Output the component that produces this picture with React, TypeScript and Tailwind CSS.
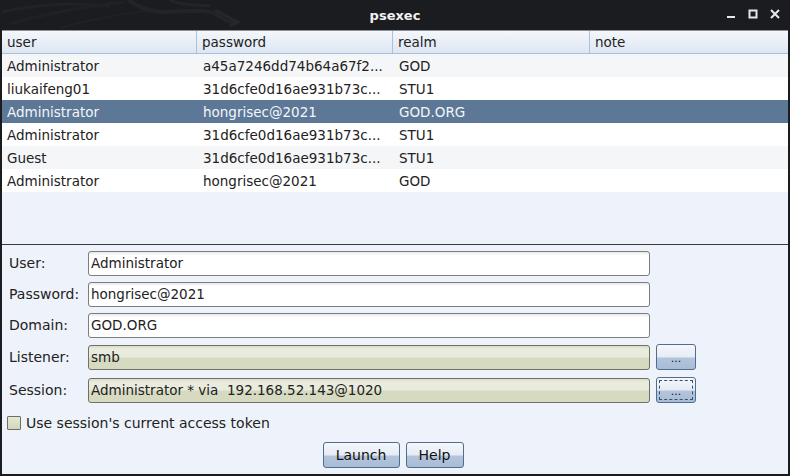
import { useState } from 'react';

const rows = [
  { user: 'Administrator', password: 'a45a7246dd74b64a67f2...', realm: 'GOD', note: '' },
  { user: 'liukaifeng01', password: '31d6cfe0d16ae931b73c...', realm: 'STU1', note: '' },
  { user: 'Administrator', password: 'hongrisec@2021', realm: 'GOD.ORG', note: '' },
  { user: 'Administrator', password: '31d6cfe0d16ae931b73c...', realm: 'STU1', note: '' },
  { user: 'Guest', password: '31d6cfe0d16ae931b73c...', realm: 'STU1', note: '' },
  { user: 'Administrator', password: 'hongrisec@2021', realm: 'GOD', note: '' },
];

const fields = [
  { label: 'User:', value: 'Administrator', rowCls: 'h-[25px] mt-[6px]' },
  { label: 'Password:', value: 'hongrisec@2021', rowCls: 'h-[25px] mt-[6px]' },
  { label: 'Domain:', value: 'GOD.ORG', rowCls: 'h-[25px] mt-[6px]' },
  { label: 'Listener:', value: 'smb', rowCls: 'h-[26px] mt-[6px]', olive: true },
  { label: 'Session:', value: 'Administrator * via  192.168.52.143@1020', rowCls: 'h-[26px] mt-[7px]', olive: true, focused: true },
];

const TextField = ({ value, olive }: { value: string; olive?: boolean }) => (
  <div
    className={
      'w-[562px] h-[25px] rounded-[3px] border flex items-center pl-[2px] ' +
      (olive
        ? 'border-[#6f7262] bg-[linear-gradient(#d9dcc9_0px,#e9ebdd_3px,#e9ebdd_11px,#d5dac0_12px,#d5dac0_100%)]'
        : 'border-[#7d7d7d] bg-[linear-gradient(#e6e6e6_0px,#ffffff_3px,#ffffff_100%)]')
    }
  >
    <span className="text-[13.5px] text-[#222] whitespace-pre">{value}</span>
  </div>
);

const DotsButton = ({ focused }: { focused?: boolean }) => (
  <button className="w-[40px] h-[26px] rounded-[3px] border border-[#4f6d8c] bg-[linear-gradient(#f4f7fb_0px,#e6ecf4_12px,#b3c5dc_13px,#a8bcd6_100%)] p-[2px]">
    <div
      className={
        'w-full h-full flex items-center justify-center text-[11px] leading-none pt-[3px] text-[#111] ' +
        (focused ? 'border border-dashed border-[#39506a]' : '')
      }
    >
      ...
    </div>
  </button>
);

const Button = ({ label, w }: { label: string; w: string }) => (
  <button
    className={
      w +
      ' h-[26px] rounded-[3px] border border-[#4f6d8c] bg-[linear-gradient(#f4f7fb_0px,#e6ecf4_12px,#b3c5dc_13px,#a8bcd6_100%)] text-[14px] text-[#111] flex items-center justify-center'
    }
  >
    {label}
  </button>
);

export default function App() {
  const [selected] = useState(2);

  return (
    <div
      className="w-[790px] h-[476px] bg-[#1b1c20] flex flex-col overflow-hidden"
      style={{ fontFamily: '"DejaVu Sans", Verdana, sans-serif' }}
    >
      {/* title bar */}
      <div className="relative h-[30px] shrink-0 flex items-center justify-center">
        <svg className="absolute left-0 top-0" width="260" height="30" viewBox="0 0 260 30" fill="none">
          <path d="M2 12 C40 4 70 2 110 6" stroke="#212228" strokeWidth="3" />
          <path d="M10 24 C50 12 90 6 125 2" stroke="#202127" strokeWidth="3" />
          <path d="M60 28 C90 20 120 14 150 10" stroke="#202127" strokeWidth="2" />
          <path d="M128 0 C140 8 150 12 165 12 C185 12 205 8 215 14 C225 20 232 24 238 22" stroke="#23242a" strokeWidth="4" />
          <path d="M170 0 C180 6 196 4 210 6" stroke="#23242a" strokeWidth="3" />
          <path d="M215 10 L238 22 L230 26" stroke="#26272d" strokeWidth="3" />
        </svg>
        <span className="relative text-[13px] font-bold text-[#f2f2f2] pt-[1px]">psexec</span>
        <div className="absolute right-[10px] top-[9px] flex items-center gap-[12px]">
          <svg width="10" height="10" viewBox="0 0 10 10">
            <rect x="1" y="7" width="8" height="2" fill="#e8e8e8" />
          </svg>
          <svg width="10" height="10" viewBox="0 0 10 10">
            <rect x="1.5" y="1.5" width="7" height="7" stroke="#e8e8e8" strokeWidth="2" fill="none" />
          </svg>
          <svg width="10" height="10" viewBox="0 0 10 10">
            <path d="M1 1 L9 9 M9 1 L1 9" stroke="#e8e8e8" strokeWidth="2" />
          </svg>
        </div>
      </div>

      {/* content */}
      <div className="flex-1 mx-[2px] mb-[2px] bg-[#eef2fa] flex flex-col">
        {/* table */}
        <div className="h-[215px] shrink-0 border-b border-[#3a3a3a] border-t border-t-[#8a8f98] bg-[#eef2fa] flex flex-col">
          <div className="h-[23px] flex border-b border-[#a9c1dd] bg-[linear-gradient(#f4f7fc,#dde6f2)] text-[13.5px] text-[#222]">
            {['user', 'password', 'realm', 'note'].map((h, i) => (
              <div
                key={h}
                className={
                  'flex items-center pl-[5px] pt-[1px] ' +
                  (i === 0 ? 'w-[195px] border-r border-[#a9c1dd]' : i === 1 ? 'w-[196px] border-r border-[#a9c1dd]' : i === 2 ? 'w-[197px] border-r border-[#a9c1dd]' : 'flex-1')
                }
              >
                {h}
              </div>
            ))}
          </div>
          {rows.map((r, i) => (
            <div
              key={i}
              className={
                'h-[23px] flex text-[13.5px] pt-[2px] ' +
                (i === selected ? 'bg-[#5c7896] text-[#f4f6f9]' : i % 2 === 0 ? 'bg-[#f5f6f8] text-[#222]' : 'bg-white text-[#222]')
              }
            >
              <div className="w-[195px] pl-[5px] flex items-center">{r.user}</div>
              <div className="w-[196px] pl-[6px] flex items-center">{r.password}</div>
              <div className="w-[197px] pl-[6px] flex items-center">{r.realm}</div>
              <div className="flex-1 pl-[6px] flex items-center">{r.note}</div>
            </div>
          ))}
        </div>

        {/* form */}
        <div className="flex flex-col pl-[7px]">
          {fields.map((f) => (
            <div key={f.label} className={'flex items-center ' + f.rowCls}>
              <span className="w-[79px] text-[14px] text-[#222]">{f.label}</span>
              <TextField value={f.value} olive={f.olive} />
              {f.olive && (
                <div className="ml-[6px]">
                  <DotsButton focused={f.focused} />
                </div>
              )}
            </div>
          ))}
          <label className="flex items-center gap-[5px] h-[14px] mt-[13px] -ml-[2px]">
            <span className="w-[14px] h-[14px] border border-[#6e705f] bg-[linear-gradient(#e6e8d8,#d2d6bc)] rounded-[1px]" />
            <span className="text-[14px] text-[#222]">Use session's current access token</span>
          </label>
        </div>
        <div className="flex justify-center gap-[6px] mt-[12px] -ml-[4px]">
          <Button label="Launch" w="w-[77px]" />
          <Button label="Help" w="w-[58px]" />
        </div>
      </div>
    </div>
  );
}
